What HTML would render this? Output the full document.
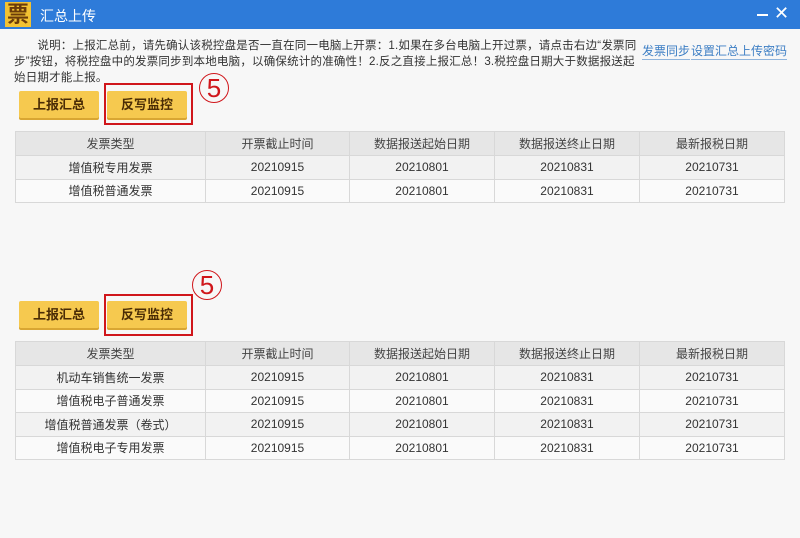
<!DOCTYPE html>
<html><head><meta charset="utf-8"><style>
*{margin:0;padding:0;box-sizing:border-box}
body{width:800px;height:538px;background:#f7f7f7;font-family:"Liberation Sans","Noto Sans CJK SC",sans-serif;position:relative;overflow:hidden;color:#333}
.title{position:absolute;left:0;top:0;width:800px;height:29px;background:#2e7bd9}
.logo{position:absolute;left:5px;top:2px;width:26px;height:25px;background:#f2c233;color:#6b3c0a;font-size:22px;font-weight:bold;line-height:25px;text-align:center}
.tt{position:absolute;left:40px;top:6px;color:#fff;font-size:14px}
.desc{position:absolute;left:14px;top:38px;font-size:11.5px;line-height:16px;color:#333;white-space:nowrap;letter-spacing:0.2px}
.lnk{position:absolute;top:42px;font-size:12px;color:#3c7ec4;border-bottom:1px solid #8fb4dc}
.btn{position:absolute;width:80px;height:27px;background:#f6c94f;border-radius:2px;font-size:13px;font-weight:bold;color:#4a2c05;text-align:center;line-height:27px;box-shadow:0 2px 0 #d9a632}
.red{position:absolute;border:2px solid #d0161b;width:89px;height:42px}
.circ{position:absolute;width:30px;height:30px;border:1px solid #d0161b;border-radius:50%;color:#d0161b;font-size:26px;line-height:28px;text-align:center}
table{position:absolute;left:15px;width:770px;border-collapse:collapse;font-size:12px;table-layout:fixed}
td{border:1px solid #d8d8d8;text-align:center;height:23.5px;color:#333}
tr.h td{background:#e6e6e6;height:24px;color:#444}
tr:nth-child(even) td{background:#f2f2f2}
tr:nth-child(odd):not(.h) td{background:#fafafa}
</style></head><body>
<div class="title"><div class="logo">票</div><div class="tt">汇总上传</div>
<div style="position:absolute;left:757px;top:14px;width:11px;height:2px;background:#fff"></div>
<div style="position:absolute;left:774px;top:3px;color:#fff;font-size:18px">✕</div></div>
<div class="desc">　　说明：上报汇总前，请先确认该税控盘是否一直在同一电脑上开票：1.如果在多台电脑上开过票，请点击右边“发票同<br>步”按钮，将税控盘中的发票同步到本地电脑，以确保统计的准确性！2.反之直接上报汇总！3.税控盘日期大于数据报送起<br>始日期才能上报。</div>
<div class="lnk" style="left:642px">发票同步</div>
<div class="lnk" style="left:691px">设置汇总上传密码</div>

<div class="btn" style="left:19px;top:91px">上报汇总</div>
<div class="btn" style="left:107px;top:91px">反写监控</div>
<div class="red" style="left:104px;top:83px"></div>
<div class="circ" style="left:199px;top:73px">5</div>
<table style="top:131px"><colgroup><col style="width:190px"><col style="width:144px"><col style="width:145px"><col style="width:145px"><col></colgroup>
<tr class="h"><td>发票类型</td><td>开票截止时间</td><td>数据报送起始日期</td><td>数据报送终止日期</td><td>最新报税日期</td></tr>
<tr><td>增值税专用发票</td><td>20210915</td><td>20210801</td><td>20210831</td><td>20210731</td></tr>
<tr><td>增值税普通发票</td><td>20210915</td><td>20210801</td><td>20210831</td><td>20210731</td></tr>
</table>

<div class="btn" style="left:19px;top:301px">上报汇总</div>
<div class="btn" style="left:107px;top:301px">反写监控</div>
<div class="red" style="left:104px;top:294px"></div>
<div class="circ" style="left:192px;top:270px">5</div>
<table style="top:341px"><colgroup><col style="width:190px"><col style="width:144px"><col style="width:145px"><col style="width:145px"><col></colgroup>
<tr class="h"><td>发票类型</td><td>开票截止时间</td><td>数据报送起始日期</td><td>数据报送终止日期</td><td>最新报税日期</td></tr>
<tr><td>机动车销售统一发票</td><td>20210915</td><td>20210801</td><td>20210831</td><td>20210731</td></tr>
<tr><td>增值税电子普通发票</td><td>20210915</td><td>20210801</td><td>20210831</td><td>20210731</td></tr>
<tr><td>增值税普通发票（卷式）</td><td>20210915</td><td>20210801</td><td>20210831</td><td>20210731</td></tr>
<tr><td>增值税电子专用发票</td><td>20210915</td><td>20210801</td><td>20210831</td><td>20210731</td></tr>
</table>
</body></html>
